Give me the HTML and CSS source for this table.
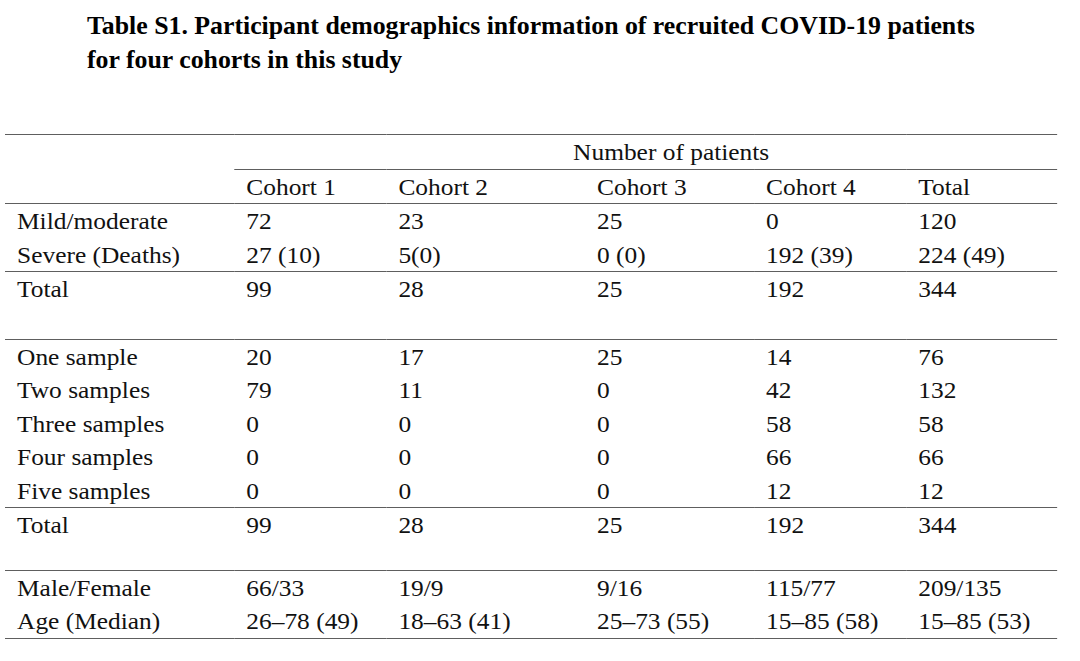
FILE: index.html
```html
<!DOCTYPE html>
<html lang="en">
<head>
<meta charset="utf-8">
<title>Table S1</title>
<link rel="stylesheet" href="styles.css">
</head>
<body>
<div class="page">
  <h1 class="title">
    <span class="title-line">Table S1. Participant demographics information of recruited COVID-19 patients</span>
    <span class="title-line">for four cohorts in this study</span>
  </h1>
  <table class="demo">
    <colgroup>
      <col class="c-label">
      <col class="c-1">
      <col class="c-2">
      <col class="c-3">
      <col class="c-4">
      <col class="c-tot">
    </colgroup>
    <thead>
      <tr class="row">
        <td></td>
        <td colspan="5" class="span-head">Number of patients</td>
      </tr>
      <tr class="row head-row">
        <td></td>
        <td>Cohort 1</td>
        <td>Cohort 2</td>
        <td>Cohort 3</td>
        <td>Cohort 4</td>
        <td>Total</td>
      </tr>
    </thead>
    <tbody>
      <tr class="row"><td>Mild/moderate</td><td>72</td><td>23</td><td>25</td><td>0</td><td>120</td></tr>
      <tr class="row"><td>Severe (Deaths)</td><td>27 (10)</td><td>5(0)</td><td>0 (0)</td><td>192 (39)</td><td>224 (49)</td></tr>
    </tbody>
    <tbody class="grp">
      <tr class="row"><td>Total</td><td>99</td><td>28</td><td>25</td><td>192</td><td>344</td></tr>
      <tr class="spacer spacer-a"><td colspan="6"></td></tr>
    </tbody>
    <tbody class="grp">
      <tr class="row"><td>One sample</td><td>20</td><td>17</td><td>25</td><td>14</td><td>76</td></tr>
      <tr class="row"><td>Two samples</td><td>79</td><td>11</td><td>0</td><td>42</td><td>132</td></tr>
      <tr class="row"><td>Three samples</td><td>0</td><td>0</td><td>0</td><td>58</td><td>58</td></tr>
      <tr class="row"><td>Four samples</td><td>0</td><td>0</td><td>0</td><td>66</td><td>66</td></tr>
      <tr class="row"><td>Five samples</td><td>0</td><td>0</td><td>0</td><td>12</td><td>12</td></tr>
    </tbody>
    <tbody class="grp">
      <tr class="row"><td>Total</td><td>99</td><td>28</td><td>25</td><td>192</td><td>344</td></tr>
      <tr class="spacer spacer-b"><td colspan="6"></td></tr>
    </tbody>
    <tbody class="grp">
      <tr class="row"><td>Male/Female</td><td>66/33</td><td>19/9</td><td>9/16</td><td>115/77</td><td>209/135</td></tr>
      <tr class="row"><td>Age (Median)</td><td>26–78 (49)</td><td>18–63 (41)</td><td>25–73 (55)</td><td>15–85 (58)</td><td>15–85 (53)</td></tr>
    </tbody>
  </table>
</div>
</body>
</html>
```

FILE: styles.css
```css
html, body {
  margin: 0;
  padding: 0;
  background: #ffffff;
}

body {
  width: 1080px;
  height: 661px;
  overflow: hidden;
  color: #111111;
  font-family: "Liberation Serif", "Times New Roman", serif;
}

.page {
  padding-top: 9px;
}

.title {
  margin: 0 0 0 87px;
  font-size: 25.8px;
  line-height: 34px;
  font-weight: bold;
  color: #000000;
}

.title-line {
  display: block;
  white-space: nowrap;
}

.demo {
  margin: 57px 0 0 5px;
  width: 927px;
  table-layout: fixed;
  border-collapse: collapse;
  border-top: 1px solid #5e5e5e;
  border-bottom: 1px solid #5e5e5e;
  font-size: 22.4px;
  transform: scaleX(1.135);
  transform-origin: 0 0;
}

.c-label { width: 202px; }
.c-1 { width: 134px; }
.c-2 { width: 175px; }
.c-3 { width: 149px; }
.c-4 { width: 134px; }
.c-tot { width: 133px; }

.row td {
  padding: 3px 0 0 10.6px;
  line-height: 30.5px;
  white-space: nowrap;
  vertical-align: top;
}

.span-head {
  border-bottom: 1px solid #5e5e5e;
}

.row td.span-head {
  padding-left: 298.5px;
}

.head-row {
  border-bottom: 1px solid #5e5e5e;
}

.grp {
  border-top: 1px solid #5e5e5e;
}

.spacer td {
  padding: 0;
  line-height: 0;
}

.spacer-a td { height: 33px; }
.spacer-b td { height: 28px; }
```
